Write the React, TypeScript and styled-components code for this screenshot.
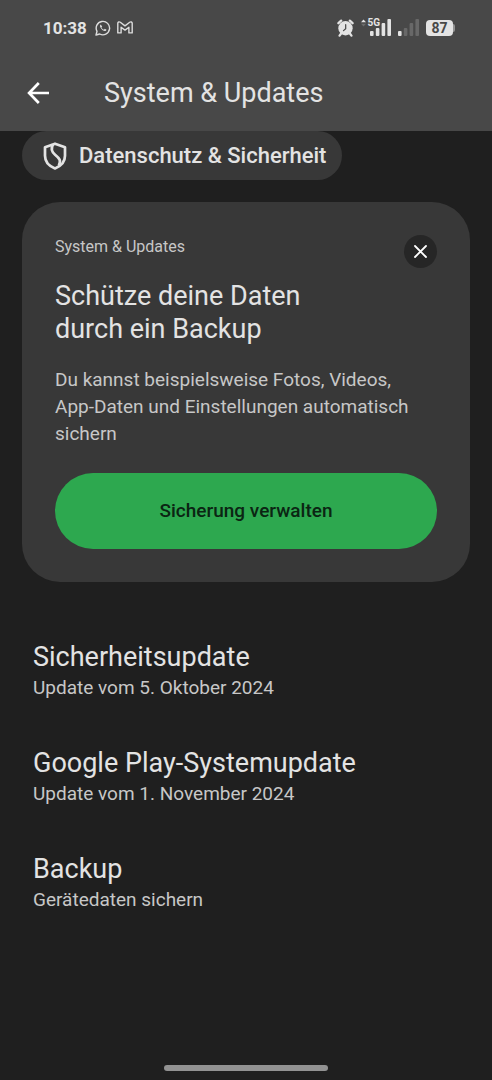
import React from "react";
import styled, { createGlobalStyle } from "styled-components";

const GlobalStyle = createGlobalStyle`
  *, *::before, *::after { box-sizing: border-box; }
  body { margin: 0; background: #1f1f1f; color: #e3e3e3; font-family: Roboto, "Noto Sans", sans-serif; }
  h1, h2, h3, p, ul { margin: 0; padding: 0; font-weight: 400; }
  button { border: 0; padding: 0; font-family: inherit; cursor: pointer; }
  svg { display: block; flex: none; }
`;

const Screen = styled.div`
  min-height: 100vh;
  display: flex;
  flex-direction: column;
`;

const Top = styled.header`
  background: #484848;
`;

const StatusBar = styled.div`
  height: 55px;
  padding: 0 37px 0 43px;
  display: flex;
  align-items: center;
  justify-content: space-between;
`;

const StatusGroup = styled.div<{ $gap: number }>`
  display: flex;
  align-items: center;
  gap: ${(p) => p.$gap}px;
`;

const Clock = styled.time`
  font-size: 17px;
  line-height: 20px;
  font-weight: 700;
  margin-right: 2px;
`;

const Network = styled.div`
  display: flex;
  align-items: flex-start;
`;

const NetworkLabel = styled.span`
  font-size: 10px;
  line-height: 8px;
  font-weight: 700;
  margin: 0 -10px 0 1px;
`;

const Battery = styled.div`
  display: flex;
  align-items: center;
`;

const BatteryBody = styled.span`
  width: 27px;
  height: 16px;
  border-radius: 4px;
  background: #e3e3e3;
  color: #484848;
  font-size: 14px;
  line-height: 16px;
  font-weight: 700;
  text-align: center;
`;

const BatteryTip = styled.span`
  width: 2px;
  height: 8px;
  border-radius: 0 2px 2px 0;
  background: #929292;
`;

const AppBar = styled.div`
  height: 76px;
  padding: 0 24px;
  display: flex;
  align-items: center;
  gap: 52px;
`;

const BackButton = styled.button`
  width: 28px;
  height: 28px;
  display: grid;
  place-items: center;
  background: none;
  color: #ffffff;
`;

const Title = styled.h1`
  font-size: 27px;
  line-height: 36px;
`;

const Main = styled.main`
  flex: 1;
  padding: 0 22px;
`;

const Chip = styled.button`
  height: 49px;
  padding: 0 16px 0 21px;
  border-radius: 25px;
  display: flex;
  align-items: center;
  gap: 12px;
  background: #383838;
  color: #e3e3e3;
  font-size: 22px;
  line-height: 29px;
  font-weight: 500;
`;

const Card = styled.section`
  margin-top: 22px;
  padding: 33px;
  border-radius: 38px;
  background: #383838;
`;

const CardTop = styled.div`
  display: flex;
  align-items: flex-start;
  justify-content: space-between;
`;

const Eyebrow = styled.p`
  font-size: 16px;
  line-height: 24px;
  color: #c7c7c7;
`;

const CloseButton = styled.button`
  width: 33px;
  height: 33px;
  border-radius: 50%;
  display: grid;
  place-items: center;
  background: #262626;
  color: #ffffff;
`;

const CardTitle = styled.h2`
  max-width: 280px;
  margin-top: 12px;
  font-size: 27px;
  line-height: 33px;
`;

const CardText = styled.p`
  margin-top: 20px;
  padding-right: 24px;
  font-size: 19px;
  line-height: 27px;
  color: #c7c7c7;
`;

const PrimaryButton = styled.button`
  width: 100%;
  height: 76px;
  margin-top: 26px;
  border-radius: 38px;
  background: #2da84f;
  color: #0b2513;
  font-size: 19px;
  line-height: 24px;
  font-weight: 500;
`;

const List = styled.ul`
  list-style: none;
  margin-top: 57px;
  padding: 0 11px;
  display: flex;
  flex-direction: column;
  gap: 44px;
`;

const ItemTitle = styled.h3`
  font-size: 27px;
  line-height: 36px;
`;

const ItemText = styled.p`
  font-size: 19px;
  line-height: 26px;
  color: #c7c7c7;
`;

const HomeBar = styled.div`
  width: 164px;
  height: 6px;
  margin: 24px auto 9px;
  border-radius: 3px;
  background: #929292;
`;

const items = [
  { title: "Sicherheitsupdate", text: "Update vom 5. Oktober 2024" },
  { title: "Google Play-Systemupdate", text: "Update vom 1. November 2024" },
  { title: "Backup", text: "Gerätedaten sichern" },
];

const WhatsAppIcon = () => (
  <svg width="16" height="16" viewBox="0 0 16 16" fill="none" stroke="#dcdcdc">
    <path d="M1 15l1-3.700a6.700 6.700 0 1 1 2.700 2.700z" strokeWidth="1.400" strokeLinejoin="round" />
    <path d="M5.700 4.500c-1 .7-.9 2 .1 3.600 1.200 1.900 2.900 3 4.200 2.900.8-.1 1.400-.6 1.500-1.300L9.800 8.800l-.9 1c-1-.4-1.900-1.200-2.500-2.300l.8-.9z" fill="#dcdcdc" stroke="none" />
  </svg>
);

const MailIcon = () => (
  <svg width="16" height="13" viewBox="0 0 16 13" fill="none" stroke="#dcdcdc" strokeWidth="1.400" strokeLinejoin="round">
    <path d="M.8 11.900V2.300C.8.900 2.300.5 3.300 1.300L8 4.900l4.700-3.600c1-.8 2.500-.4 2.500 1v9.600h-3.300V6.200L8 9.100 4.100 6.200v5.700z" />
  </svg>
);

const AlarmIcon = () => (
  <svg width="17" height="18" viewBox="0 0 18 19">
    <circle cx="9" cy="9.800" r="7.600" fill="#e3e3e3" />
    <path d="M1.500 4.400L4.400 1.700M16.500 4.400l-2.900-2.700M4.200 15.600l-1.500 2M13.800 15.600l1.500 2" stroke="#e3e3e3" strokeWidth="2.400" strokeLinecap="round" />
    <path d="M9.200 6v4.200l-2.300 2.100" fill="none" stroke="#484848" strokeWidth="1.300" strokeLinecap="round" />
  </svg>
);

const DataArrows = () => (
  <svg width="5" height="8" viewBox="0 0 5 8">
    <path d="M0 3.300L2.500.5 5 3.300z" fill="#e3e3e3" />
    <path d="M0 4.700h5L2.500 7.500z" fill="#6c6c6c" />
  </svg>
);

const SignalBars = ({ level }: { level: number }) => (
  <svg width="21" height="17" viewBox="0 0 21 17">
    {[5, 8, 13, 17].map((h, i) => (
      <rect key={h} x={i * 5.8} y={17 - h} width="3.600" height={h} rx="1" fill={i < level ? "#e3e3e3" : "#686868"} />
    ))}
  </svg>
);

const BackIcon = () => (
  <svg width="24" height="24" viewBox="0 0 24 24" fill="none" stroke="currentColor" strokeWidth="2.700">
    <path d="M23 12H3.500M12.800 2L3.100 12l9.700 10" />
  </svg>
);

const ShieldIcon = () => (
  <svg width="24" height="28" viewBox="0 0 24 28" fill="none" stroke="currentColor" strokeWidth="2.700" strokeLinejoin="round">
    <path d="M12 1.700l10 3.600v8.500c0 5.500-3.900 10.300-10 12.600C5.900 24.100 2 19.300 2 13.800V5.300z" />
    <path d="M10 2.500c-2.600 4.300-1.300 7.300 2.100 10.300 4.400 3.700 6.300 5.600 3.700 10.800" />
  </svg>
);

const CloseIcon = () => (
  <svg width="13" height="13" viewBox="0 0 13 13" stroke="currentColor" strokeWidth="1.800" strokeLinecap="round">
    <path d="M1 1l11 11M12 1L1 12" />
  </svg>
);

export default function App() {
  return (
    <>
      <GlobalStyle />
      <Screen>
        <Top>
          <StatusBar>
            <StatusGroup $gap={6}>
              <Clock>10:38</Clock>
              <WhatsAppIcon />
              <MailIcon />
            </StatusGroup>
            <StatusGroup $gap={7}>
              <AlarmIcon />
              <Network>
                <DataArrows />
                <NetworkLabel>5G</NetworkLabel>
                <SignalBars level={4} />
              </Network>
              <SignalBars level={1} />
              <Battery>
                <BatteryBody>87</BatteryBody>
                <BatteryTip />
              </Battery>
            </StatusGroup>
          </StatusBar>
          <AppBar>
            <BackButton aria-label="Zurück">
              <BackIcon />
            </BackButton>
            <Title>System &amp; Updates</Title>
          </AppBar>
        </Top>
        <Main>
          <Chip>
            <ShieldIcon />
            Datenschutz &amp; Sicherheit
          </Chip>
          <Card>
            <CardTop>
              <Eyebrow>System &amp; Updates</Eyebrow>
              <CloseButton aria-label="Schließen">
                <CloseIcon />
              </CloseButton>
            </CardTop>
            <CardTitle>Schütze deine Daten durch ein Backup</CardTitle>
            <CardText>Du kannst beispielsweise Fotos, Videos, App-Daten und Einstellungen automatisch sichern</CardText>
            <PrimaryButton>Sicherung verwalten</PrimaryButton>
          </Card>
          <List>
            {items.map((item) => (
              <li key={item.title}>
                <ItemTitle>{item.title}</ItemTitle>
                <ItemText>{item.text}</ItemText>
              </li>
            ))}
          </List>
        </Main>
        <HomeBar />
      </Screen>
    </>
  );
}
